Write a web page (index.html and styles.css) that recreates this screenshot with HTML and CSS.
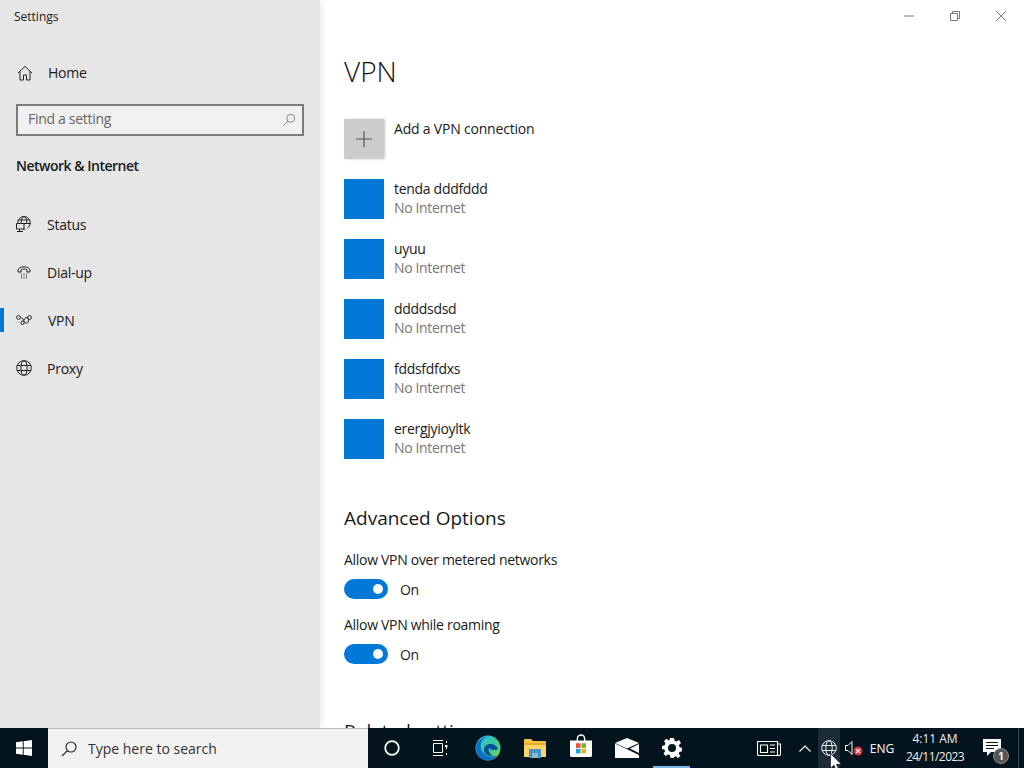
FILE: index.html
```html
<!DOCTYPE html>
<html lang="en">
<head>
<meta charset="utf-8">
<title>Settings</title>
<link rel="stylesheet" href="styles.css">
</head>
<body>
<div class="screen">
  <div class="window">
    <aside class="sidebar">
      <div class="app-title">Settings</div>
      <div class="nav-row home">
        <svg class="nav-icon" viewBox="0 0 16 16"><path d="M1 8 8 1.500 15 8M3 6.500V15h3.500v-5h3v5H13V6.500"/></svg>
        <span>Home</span>
      </div>
      <div class="search"><span>Find a setting</span>
        <svg class="search-icon" viewBox="0 0 16 16"><circle cx="10" cy="6" r="4.500"/><path d="M6.800 9.200 1.500 14.500"/></svg>
      </div>
      <div class="section">Network &amp; Internet</div>
      <nav class="nav">
        <div class="nav-row">
          <svg class="nav-icon" viewBox="0 0 16 16"><circle cx="8" cy="6.800" r="6.300"/><ellipse cx="8" cy="6.800" rx="2.800" ry="6.300"/><path d="M2 4h12"/><path class="mask" d="M.5 7.500h11v5.500H.5z"/><path d="M8 7.500h6.500M.5 7.500h7.500v5.500H.5zM3.500 13v2.500M1 15.500h6"/></svg>
          <span>Status</span>
        </div>
        <div class="nav-row">
          <svg class="nav-icon" viewBox="0 0 16 16"><path d="M2 6.500C2 1.500 14 1.500 14 6.500V8h-3V6C10 4.500 6 4.500 5 6v2H2z"/><path class="dots" d="M5 10h1M7.500 10h1M10 10h1M5 12h1M7.500 12h1M10 12h1M5 14h1M7.500 14h1M10 14h1"/></svg>
          <span>Dial-up</span>
        </div>
        <div class="nav-row active">
          <svg class="nav-icon" viewBox="0 0 16 16"><circle cx="2.500" cy="5.500" r="1.900"/><circle cx="13.500" cy="5.500" r="1.900"/><circle cx="6.500" cy="10.800" r="1.700"/><path d="M4.400 5.500C6 5.500 7 7 8.500 9.800 9.500 11.800 12 11.300 12.500 9.200 13 7.500 11.500 5 10 5.500 9 6 8.500 7 8 8"/></svg>
          <span>VPN</span>
        </div>
        <div class="nav-row">
          <svg class="nav-icon" viewBox="0 0 16 16"><circle cx="8" cy="8" r="7.300"/><ellipse cx="8" cy="8" rx="3.200" ry="7.300"/><path d="M1.200 5.500h13.600M1.200 10.500h13.600"/></svg>
          <span>Proxy</span>
        </div>
      </nav>
    </aside>
    <main class="content">
      <div class="controls">
        <svg class="ctl" viewBox="0 0 10 10"><path d="M0 5h10"/></svg>
        <svg class="ctl" viewBox="0 0 10 10"><path d="M.5 2.500h7v7h-7zM2.500 2.500V.5h7v7h-2"/></svg>
        <svg class="ctl" viewBox="0 0 10 10"><path d="M0 0l10 10M10 0 0 10"/></svg>
      </div>
      <h1 class="title">VPN</h1>
      <div class="add-row">
        <div class="add-tile"><svg viewBox="0 0 16 16"><path d="M8 0v16M0 8h16"/></svg></div>
        <div class="add-label">Add a VPN connection</div>
      </div>
      <div class="vpn-list">
        <div class="vpn"><div class="tile"></div><div class="vpn-text"><div>tenda dddfddd</div><div class="status">No Internet</div></div></div>
        <div class="vpn"><div class="tile"></div><div class="vpn-text"><div>uyuu</div><div class="status">No Internet</div></div></div>
        <div class="vpn"><div class="tile"></div><div class="vpn-text"><div>ddddsdsd</div><div class="status">No Internet</div></div></div>
        <div class="vpn"><div class="tile"></div><div class="vpn-text"><div>fddsfdfdxs</div><div class="status">No Internet</div></div></div>
        <div class="vpn"><div class="tile"></div><div class="vpn-text"><div>erergjyioyltk</div><div class="status">No Internet</div></div></div>
      </div>
      <h2 class="subtitle">Advanced Options</h2>
      <div class="option">
        <div class="opt-label">Allow VPN over metered networks</div>
        <div class="toggle-row"><div class="toggle"><div class="knob"></div></div><span>On</span></div>
      </div>
      <div class="option">
        <div class="opt-label">Allow VPN while roaming</div>
        <div class="toggle-row"><div class="toggle"><div class="knob"></div></div><span>On</span></div>
      </div>
      <h2 class="subtitle related">Related settings</h2>
    </main>
  </div>
  <footer class="taskbar">
    <div class="start">
      <svg viewBox="0 0 16 16"><path d="M0 2.300 6.800 1.300V7.500H0zM7.700 1.200 16 0V7.500H7.700zM0 8.400H6.800V14.700L0 13.700zM7.700 8.400H16V16L7.700 14.800z"/></svg>
    </div>
    <div class="tsearch">
      <svg viewBox="0 0 16 16"><circle cx="10" cy="6" r="5"/><path d="M6.500 9.500 1 15"/></svg>
      <span>Type here to search</span>
    </div>
    <div class="tb wide">
      <svg class="i16" viewBox="0 0 16 16"><circle cx="8" cy="8" r="6.800" fill="none" stroke="#fff" stroke-width="1.700"/></svg>
    </div>
    <div class="tb wide">
      <svg class="i16" viewBox="0 0 16 16" fill="none" stroke="#fff" stroke-width="1"><path d="M1 .5h10M1 15.500h10M1.500 3.500h9v9h-9zM14.500 1v2M14.500 7v2M14.500 13v2" /><path d="M13 5h2.500v2H13z" fill="#fff" stroke="none"/></svg>
    </div>
    <div class="tb wide">
      <svg class="i26" viewBox="0 0 26 26"><defs><linearGradient id="eg" x1="0" y1="0" x2="1" y2="1"><stop offset="0" stop-color="#35c1f1"/><stop offset=".55" stop-color="#36c995"/><stop offset="1" stop-color="#7fdc5c"/></linearGradient></defs><circle cx="13" cy="13" r="12.500" fill="url(#eg)"/><path d="M1 13C1 5 9 1 14 1.500 6 3 4 10 7 16c2.500 5 9 7 15 4.500-2.500 3.500-6 5-9.500 5C6 25.500 1 20 1 13z" fill="#0c6fc4"/><path d="M9 15c0-4 3-6 6-6 4 0 7 2 8 5-2 2-9 1-8 -1-3 0-1 6 3 8-5 0-9-2-9-6z" fill="#0a4f96"/></svg>
    </div>
    <div class="tb">
      <svg class="i22" viewBox="0 0 22 20"><path d="M0 2a1 1 0 0 1 1-1h6l2 2h12a1 1 0 0 1 1 1v15H0z" fill="#f5c342"/><path d="M0 5h22v14H0z" fill="#fbd666"/><path d="M0 5h22v2H0z" fill="#e8a92a"/><path d="M5 11h12v9H5z" fill="#4a90c8"/><path d="M8 15h6v5H8z" fill="#8ab8d8"/></svg>
    </div>
    <div class="tb">
      <svg class="i22 store" viewBox="0 0 24 24"><path d="M8 7V4a4 4 0 0 1 8 0v3" fill="none" stroke="#fff" stroke-width="1.500"/><path d="M0 6h24v16a2 2 0 0 1-2 2H2a2 2 0 0 1-2-2z" fill="#fff"/><path d="M6.500 9h5v5h-5z" fill="#e8542f"/><path d="M12.500 9h5v5h-5z" fill="#6fb62b"/><path d="M6.500 15h5v5h-5z" fill="#1fa3e0"/><path d="M12.500 15h5v5h-5z" fill="#f7b500"/></svg>
    </div>
    <div class="tb">
      <svg class="i24" viewBox="0 0 24 20"><path d="M0 5 12 0 24 5V20H0z" fill="#fff"/><path d="M0 5.500 24 17V15L15 10.500 24 6V5L12 10.500 0 5z" fill="#04141f"/></svg>
    </div>
    <div class="tb current">
      <svg class="i20" viewBox="0 0 20 20"><path d="M8 0h4l.6 2.800 1.800.8L17 2l2 3-2 2 .4 2 2.600.9v3.400l-2.700.7-.5 1.800 1.700 2.300-2.700 2-2-1.800-1.800.6L11.500 20h-3l-.6-2.900-1.900-.7-2.300 1.600-2.200-2.500 1.600-2.200-.7-1.800L0 11.100V8l2.700-.7.700-1.900L2 3l2.500-2.200L6.700 2.500l1-.5z" fill="#fff"/><circle cx="10" cy="10" r="4" fill="#04141f"/></svg>
    </div>
    <div class="tray">
      <div class="ti news">
        <svg viewBox="0 0 24 15" fill="none" stroke="#fff" stroke-width="1.100"><path d="M.5.500h20v14H2a1.500 1.500 0 0 1-1.500-1.500zM20.500 3h3v10a1.500 1.500 0 0 1-1.500 1.500h-2M3.500 4h7v7.500h-7zM13 4h5M13 7.500h5M13 11h5"/></svg>
      </div>
      <div class="ti chev"><svg viewBox="0 0 12 7" fill="none" stroke="#fff" stroke-width="1.100"><path d="M.5 6.500 6 1l5.500 5.500"/></svg></div>
      <div class="ti globe"><svg viewBox="0 0 16 16" fill="none" stroke="#fff" stroke-width=".9"><circle cx="8" cy="8" r="7.300"/><ellipse cx="8" cy="8" rx="3.200" ry="7.300"/><path d="M1.200 5.500h13.600M1.200 10.500h13.600"/></svg></div>
      <div class="ti speaker">
        <svg viewBox="0 0 18 16"><path d="M.5 5.500h2.500L7 1.500v13L3 10.500H.5z" fill="none" stroke="#fff" stroke-width="1"/><circle cx="13" cy="11" r="4.500" fill="#d9303a"/><path d="M11 9l4 4M15 9l-4 4" stroke="#fff" stroke-width="1.200"/></svg>
      </div>
      <div class="ti lang">ENG</div>
      <div class="ti clock"><div>4:11 AM</div><div class="date">24/11/2023</div></div>
      <div class="ti notif">
        <svg viewBox="0 0 18 17"><path d="M0 0h18v13H8l-4 4v-4H0z" fill="#fff"/><path d="M3 3.500h12M3 6.500h12M3 9.500h8" stroke="#04141f" stroke-width="1"/></svg>
        <span class="badge">1</span>
      </div>
      <div class="desk"></div>
    </div>
    <svg class="cursor" viewBox="0 0 12 19"><path d="M.5.500v15l3.500-3.300 2.500 6 2.500-1-2.500-5.900h5z" fill="#fff" stroke="#111" stroke-width=".7"/></svg>
  </footer>
</div>
</body>
</html>
```
FILE: styles.css
```css
* { box-sizing: border-box; }
html, body { margin: 0; height: 100%; }
body { font-family: "Open Sans", "Noto Sans", sans-serif; font-size: 14px; color: #1a1a1a; overflow: hidden; background: #fff; }
svg { display: block; flex: none; }
.screen { width: 1024px; height: 768px; display: flex; flex-direction: column; position: relative; overflow: hidden; }
.window { height: 728px; display: flex; overflow: hidden; }

.sidebar { width: 320px; flex: none; background: #e6e6e6; box-shadow: 0 0 7px rgba(0,0,0,.12); position: relative; }
.app-title { font-size: 12px; padding: 8px 0 0 14px; height: 48px; line-height: 18px; }
.nav-row { height: 48px; display: flex; align-items: center; padding-left: 16px; gap: 15px; position: relative; }
.nav-row span { font-size: 14px; letter-spacing: -.25px; }
.nav-icon { width: 16px; height: 16px; fill: none; stroke: #222; stroke-width: 1; }
.nav-icon .mask { fill: #e6e6e6; stroke: none; }
.home { height: 49px; padding-left: 17px; gap: 14px; }
.home span { position: relative; left: 1px; }
.search { margin: 7px 16px 0; width: 288px; height: 32px; border: 2px solid #7a7a7a; background: #f0f0f0; display: flex; align-items: center; justify-content: space-between; padding: 0 6px 3px 10px; color: #666; letter-spacing: -.3px; }
.search-icon { width: 14px; height: 14px; fill: none; stroke: #777; stroke-width: 1; margin-top: 3px; }
.section { font-weight: 600; font-size: 14px; line-height: 20px; margin: 20px 0 0 16px; letter-spacing: -.5px; }
.nav { margin-top: 24px; }
.active::before { content: ""; position: absolute; left: 0; top: 12px; width: 4px; height: 24px; background: #0078d7; }
.active span { position: relative; left: 1px; }

.content { flex: 1; padding-left: 24px; min-width: 0; background: #fff; letter-spacing: -.3px; }
.controls { height: 32px; display: flex; justify-content: flex-end; align-items: center; gap: 36px; padding-right: 18px; }
.ctl { width: 10px; height: 10px; fill: none; stroke: #777; stroke-width: 1; }
.title { font-size: 28px; font-weight: 300; margin: 18px 0 0; line-height: 42px; height: 42px; color: #111; letter-spacing: 0; }
.add-row { display: flex; margin-top: 27px; gap: 10px; }
.add-tile { width: 40px; height: 40px; background: #ccc; display: flex; align-items: center; justify-content: center; box-shadow: 1px 0 2px #c8c8c8; }
.add-tile svg { width: 16px; height: 16px; fill: none; stroke: #555; stroke-width: 1.200; }
.add-label { line-height: 20px; letter-spacing: -.2px; }
.vpn-list { margin-top: 20px; display: flex; flex-direction: column; gap: 20px; }
.vpn { display: flex; gap: 10px; height: 40px; }
.tile { width: 40px; height: 40px; background: #0078d7; }
.vpn-text { line-height: 19px; }
.status { color: #767676; letter-spacing: -.35px; }
.subtitle { font-size: 19px; font-weight: 400; margin: 45px 0 0; line-height: 28px; letter-spacing: 0; }
.option { height: 65px; }
.subtitle + .option { margin-top: 18px; }
.opt-label { line-height: 20px; height: 20px; }
.toggle-row { display: flex; align-items: center; gap: 12px; margin-top: 9px; height: 20px; }
.toggle { width: 44px; height: 20px; border-radius: 10px; background: #0078d7; display: flex; align-items: center; justify-content: flex-end; padding-right: 5px; }
.knob { width: 10px; height: 10px; border-radius: 50%; background: #fff; }
.related { margin-top: 37px; }

.taskbar { height: 40px; background: #04141f; display: flex; align-items: center; color: #fff; position: relative; }
.start { width: 48px; height: 40px; display: flex; align-items: center; justify-content: center; }
.start svg { width: 16px; height: 16px; fill: #fff; }
.tsearch { width: 320px; height: 40px; background: #f2f2f2; display: flex; align-items: center; color: #333; padding-left: 13px; gap: 11px; font-size: 14px; border-top: 1px solid #bbb; }
.tsearch svg { width: 16px; height: 16px; fill: none; stroke: #222; stroke-width: 1.100; }
.tb { width: 46px; height: 40px; display: flex; align-items: center; justify-content: center; position: relative; }
.tb.wide { width: 48px; }
.i16 { width: 16px; height: 16px; }
.i20 { width: 20px; height: 20px; }
.i22 { width: 22px; height: 20px; }
.i24 { width: 24px; height: 20px; }
.i26 { width: 26px; height: 26px; }
.store { height: 24px; margin-top: -4px; }
.current { margin-left: -1px; }
.current::after { content: ""; position: absolute; left: 4px; right: 5px; bottom: 0; height: 2px; background: #76b9ed; }
.tray { margin-left: 53px; display: flex; align-items: center; height: 40px; }
.ti { height: 40px; display: flex; align-items: center; justify-content: center; flex: none; }
.news { width: 42px; }
.news svg { width: 24px; height: 15px; }
.chev { width: 24px; margin-left: 3px; margin-right: 1px; }
.chev svg { width: 12px; height: 7px; }
.globe { width: 22px; background: #1c2c37; }
.globe svg { width: 16px; height: 16px; }
.speaker { width: 24px; padding-left: 4px; }
.speaker svg { width: 18px; height: 16px; }
.lang { width: 34px; font-size: 12px; margin-left: 1px; }
.clock { width: 72px; flex-direction: column; font-size: 12px; line-height: 18px; color: #eee; }
.date { letter-spacing: -.55px; }
.notif { width: 46px; margin-left: -1px; position: relative; }
.notif svg { width: 18px; height: 17px; margin-left: -2px; margin-top: -2px; }
.badge { position: absolute; left: 23px; top: 20px; width: 16px; height: 16px; border-radius: 50%; background: #555; border: 1px solid #888; font-size: 10px; font-weight: 700; display: flex; align-items: center; justify-content: center; }
.desk { width: 1px; height: 40px; background: #3a4a55; margin-left: 2px; }
.cursor { position: absolute; left: 830px; top: 25px; width: 12px; height: 19px; }
```
